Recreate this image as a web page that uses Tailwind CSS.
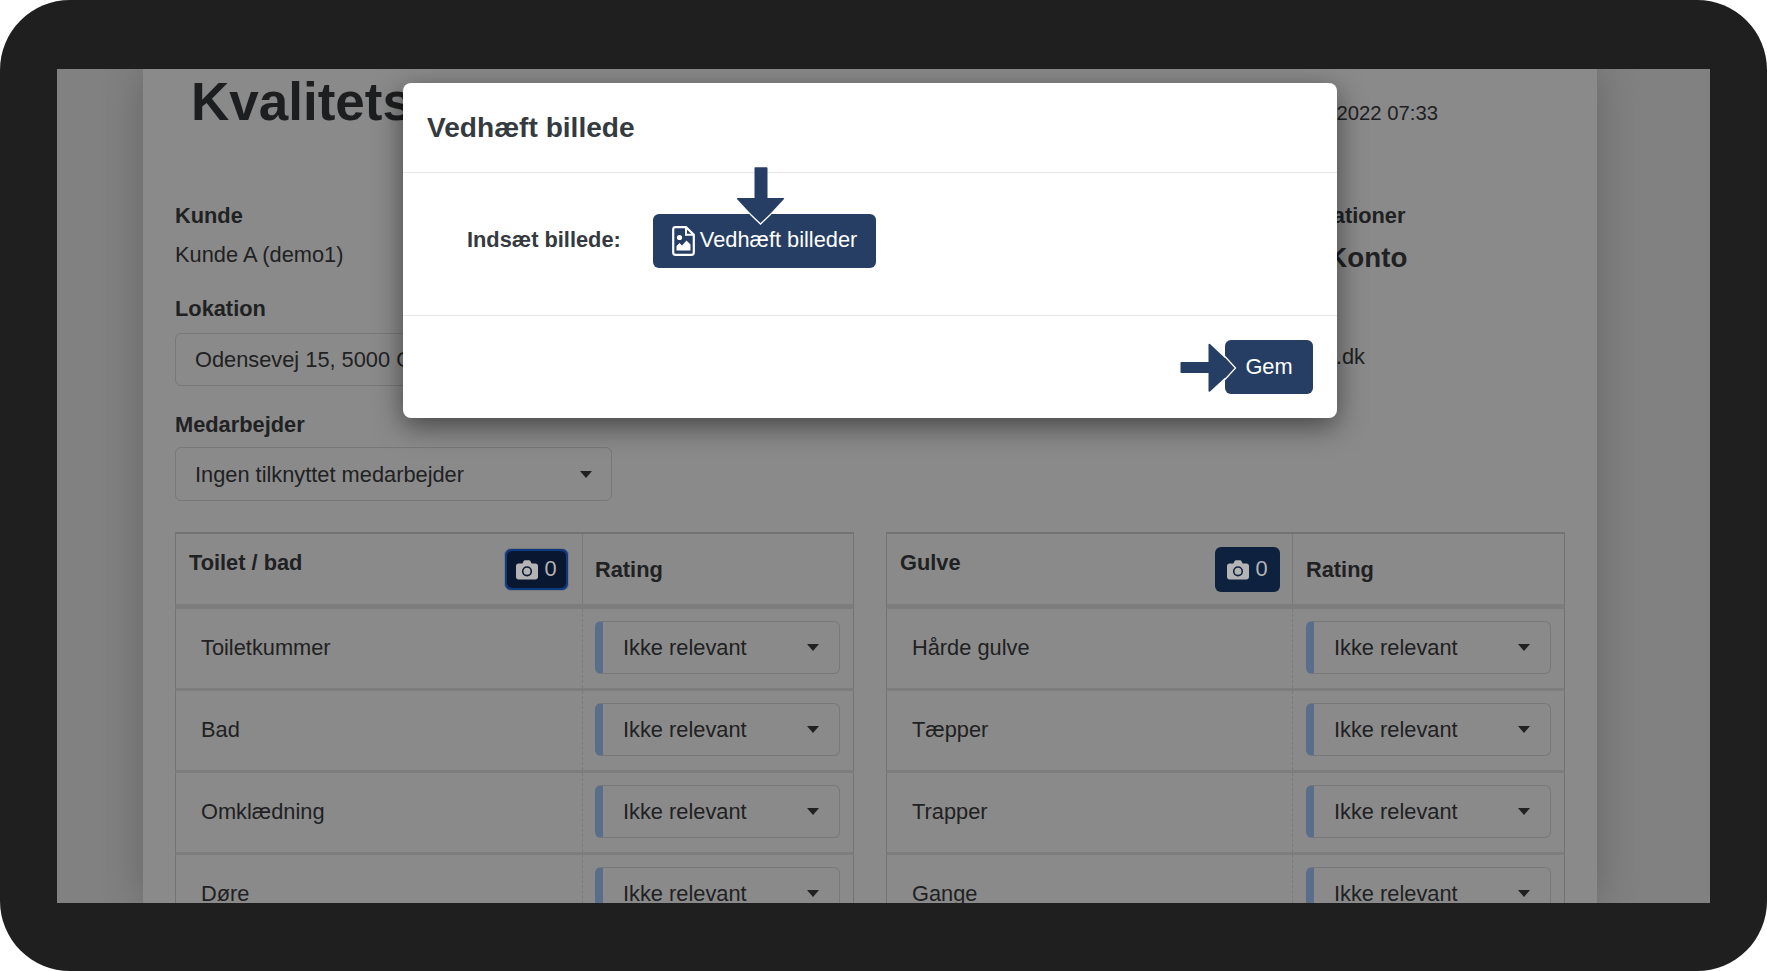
<!DOCTYPE html>
<html lang="da">
<head>
    <meta charset="UTF-8">
    <title>Vedhæft billede</title>
    <script src="https://cdn.jsdelivr.net/npm/@tailwindcss/browser@4"></script>
</head>
<body class="bg-white">
<div class="w-[1767px] h-[971px] rounded-[70px] bg-[#201f20] pt-[69px] px-[57px] font-['Liberation_Sans',sans-serif] text-[21.8px] text-[#1f2122] overflow-hidden">
    <div class="relative h-[834px] overflow-hidden bg-[#808180]">
        <!-- Dimmed page -->
        <div class="ml-[86px] w-[1454px] h-full bg-[#8a8a8a] shadow-[0_0_40px_rgba(0,0,0,0.22)] px-[32px]">
            <div class="flex justify-between h-[64px] pr-[127px]">
                <h1 class="pl-[16px] text-[53px] leading-[66px] font-bold whitespace-nowrap text-[#1c1e1f]">Kvalitetsrapport</h1>
                <span class="pt-[32px] leading-[24px] text-[20.3px]">2022 07:33</span>
            </div>
            <div class="flex">
                <div class="w-[437px] shrink-0">
                    <div class="mt-[71px] font-bold leading-[24px]">Kunde</div>
                    <div class="mt-[15px] leading-[24px]">Kunde A (demo1)</div>
                    <div class="mt-[30px] font-bold leading-[24px]">Lokation</div>
                    <div class="mt-[12px] h-[53px] rounded-[6px] border border-[#787878] pt-[2px] px-[19px] flex items-center whitespace-nowrap overflow-hidden">Odensevej 15, 5000 Odense C</div>
                    <div class="mt-[27px] font-bold leading-[24px]">Medarbejder</div>
                    <div class="mt-[10px] h-[54px] rounded-[6px] border border-[#787878] pl-[19px] pr-[19px] flex items-center justify-between">
                        <span class="pt-[2px]">Ingen tilknyttet medarbejder</span>
                        <span class="w-0 h-0 border-x-[6px] border-x-transparent border-t-[7px] border-t-[#1f2122]"></span>
                    </div>
                </div>
                <div class="ml-[653px] whitespace-nowrap">
                    <div class="mt-[71px] font-bold leading-[24px]">Informationer</div>
                    <div class="mt-[15px] pl-[7px] font-bold text-[27.7px] leading-[30px]">Min Konto</div>
                    <div class="mt-[72px] w-[100px] flex justify-end leading-[24px]">.dk</div>
                </div>
            </div>
            <div class="mt-[31px] grid grid-cols-[679px_679px] gap-x-[32px]">
                <!-- Toilet / bad -->
                <div>
                    <div class="h-[77px] flex border-x border-t-2 border-b-[5px] border-[#737373] border-b-[#7d7d7d]">
                        <div class="w-[407px] pl-[13px] pr-[13px] pt-[14px] flex justify-between border-r border-[#7a7a7a]">
                            <span class="font-bold leading-[24px] pt-[3px]">Toilet / bad</span>
                            <span class="w-[65px] h-[43px] rounded-[7px] border border-[#7b7b7b] bg-[#0c3a80] p-[2px]">
                                <span class="flex h-full items-center justify-center gap-[6px] rounded-[5px] bg-[#0a1730] text-[#b4b4b4]">
                                    <svg class="w-[22px] h-[20px]" viewBox="0 0 22 20"><path fill="#b4b4b4" d="M2.5 3.5H6.4L7.5 1.2C7.8.6 8.3.3 9 .3H13C13.7.3 14.2.6 14.5 1.2L15.6 3.5H19.5C20.9 3.5 22 4.6 22 6V17C22 18.4 20.9 19.5 19.5 19.5H2.5C1.100 19.5 0 18.400 0 17V6C0 4.600 1.100 3.500 2.500 3.500Z"/><circle cx="11" cy="11.300" r="4.300" fill="none" stroke="#0a1730" stroke-width="1.600"/></svg>
                                    <span>0</span>
                                </span>
                            </span>
                        </div>
                        <div class="pl-[12px] pt-[24px] font-bold leading-[24px]">Rating</div>
                    </div>
                    <div class="h-[82px] flex border-x border-b-[3px] border-[#737373] border-b-[#7d7d7d]">
                        <div class="w-[407px] pl-[25px] flex items-center border-r border-dashed border-[#7a7a7a]">Toiletkummer</div>
                        <div class="pl-[12px] pt-[12px]">
                            <div class="w-[245px] h-[53px] rounded-[6px] border border-[#787878] border-l-[8px] border-l-[#5a6d8b] pl-[20px] pr-[20px] flex items-center justify-between">
                                <span class="pt-[2px]">Ikke relevant</span>
                                <span class="w-0 h-0 border-x-[6px] border-x-transparent border-t-[7px] border-t-[#1f2122]"></span>
                            </div>
                        </div>
                    </div>
                    <div class="h-[82px] flex border-x border-b-[3px] border-[#737373] border-b-[#7d7d7d]">
                        <div class="w-[407px] pl-[25px] flex items-center border-r border-dashed border-[#7a7a7a]">Bad</div>
                        <div class="pl-[12px] pt-[12px]">
                            <div class="w-[245px] h-[53px] rounded-[6px] border border-[#787878] border-l-[8px] border-l-[#5a6d8b] pl-[20px] pr-[20px] flex items-center justify-between">
                                <span class="pt-[2px]">Ikke relevant</span>
                                <span class="w-0 h-0 border-x-[6px] border-x-transparent border-t-[7px] border-t-[#1f2122]"></span>
                            </div>
                        </div>
                    </div>
                    <div class="h-[82px] flex border-x border-b-[3px] border-[#737373] border-b-[#7d7d7d]">
                        <div class="w-[407px] pl-[25px] flex items-center border-r border-dashed border-[#7a7a7a]">Omklædning</div>
                        <div class="pl-[12px] pt-[12px]">
                            <div class="w-[245px] h-[53px] rounded-[6px] border border-[#787878] border-l-[8px] border-l-[#5a6d8b] pl-[20px] pr-[20px] flex items-center justify-between">
                                <span class="pt-[2px]">Ikke relevant</span>
                                <span class="w-0 h-0 border-x-[6px] border-x-transparent border-t-[7px] border-t-[#1f2122]"></span>
                            </div>
                        </div>
                    </div>
                    <div class="h-[82px] flex border-x border-b-[3px] border-[#737373] border-b-[#7d7d7d]">
                        <div class="w-[407px] pl-[25px] flex items-center border-r border-dashed border-[#7a7a7a]">Døre</div>
                        <div class="pl-[12px] pt-[12px]">
                            <div class="w-[245px] h-[53px] rounded-[6px] border border-[#787878] border-l-[8px] border-l-[#5a6d8b] pl-[20px] pr-[20px] flex items-center justify-between">
                                <span class="pt-[2px]">Ikke relevant</span>
                                <span class="w-0 h-0 border-x-[6px] border-x-transparent border-t-[7px] border-t-[#1f2122]"></span>
                            </div>
                        </div>
                    </div>
                </div>
                <!-- Gulve -->
                <div>
                    <div class="h-[77px] flex border-x border-t-2 border-b-[5px] border-[#737373] border-b-[#7d7d7d]">
                        <div class="w-[406px] pl-[13px] pr-[12px] pt-[13px] flex justify-between border-r border-[#7a7a7a]">
                            <span class="font-bold leading-[24px] pt-[4px]">Gulve</span>
                            <span class="w-[65px] h-[45px] rounded-[6px] bg-[#0e2240] flex items-center justify-center gap-[6px] text-[#b4b4b4]">
                                <svg class="w-[22px] h-[20px]" viewBox="0 0 22 20"><path fill="#b4b4b4" d="M2.5 3.5H6.4L7.5 1.2C7.8.6 8.3.3 9 .3H13C13.7.3 14.2.6 14.5 1.2L15.6 3.5H19.5C20.9 3.5 22 4.6 22 6V17C22 18.4 20.9 19.5 19.5 19.5H2.5C1.100 19.5 0 18.400 0 17V6C0 4.600 1.100 3.500 2.500 3.500Z"/><circle cx="11" cy="11.300" r="4.300" fill="none" stroke="#0e2240" stroke-width="1.600"/></svg>
                                <span>0</span>
                            </span>
                        </div>
                        <div class="pl-[13px] pt-[24px] font-bold leading-[24px]">Rating</div>
                    </div>
                    <div class="h-[82px] flex border-x border-b-[3px] border-[#737373] border-b-[#7d7d7d]">
                        <div class="w-[406px] pl-[25px] flex items-center border-r border-dashed border-[#7a7a7a]">Hårde gulve</div>
                        <div class="pl-[13px] pt-[12px]">
                            <div class="w-[245px] h-[53px] rounded-[6px] border border-[#787878] border-l-[8px] border-l-[#5a6d8b] pl-[20px] pr-[20px] flex items-center justify-between">
                                <span class="pt-[2px]">Ikke relevant</span>
                                <span class="w-0 h-0 border-x-[6px] border-x-transparent border-t-[7px] border-t-[#1f2122]"></span>
                            </div>
                        </div>
                    </div>
                    <div class="h-[82px] flex border-x border-b-[3px] border-[#737373] border-b-[#7d7d7d]">
                        <div class="w-[406px] pl-[25px] flex items-center border-r border-dashed border-[#7a7a7a]">Tæpper</div>
                        <div class="pl-[13px] pt-[12px]">
                            <div class="w-[245px] h-[53px] rounded-[6px] border border-[#787878] border-l-[8px] border-l-[#5a6d8b] pl-[20px] pr-[20px] flex items-center justify-between">
                                <span class="pt-[2px]">Ikke relevant</span>
                                <span class="w-0 h-0 border-x-[6px] border-x-transparent border-t-[7px] border-t-[#1f2122]"></span>
                            </div>
                        </div>
                    </div>
                    <div class="h-[82px] flex border-x border-b-[3px] border-[#737373] border-b-[#7d7d7d]">
                        <div class="w-[406px] pl-[25px] flex items-center border-r border-dashed border-[#7a7a7a]">Trapper</div>
                        <div class="pl-[13px] pt-[12px]">
                            <div class="w-[245px] h-[53px] rounded-[6px] border border-[#787878] border-l-[8px] border-l-[#5a6d8b] pl-[20px] pr-[20px] flex items-center justify-between">
                                <span class="pt-[2px]">Ikke relevant</span>
                                <span class="w-0 h-0 border-x-[6px] border-x-transparent border-t-[7px] border-t-[#1f2122]"></span>
                            </div>
                        </div>
                    </div>
                    <div class="h-[82px] flex border-x border-b-[3px] border-[#737373] border-b-[#7d7d7d]">
                        <div class="w-[406px] pl-[25px] flex items-center border-r border-dashed border-[#7a7a7a]">Gange</div>
                        <div class="pl-[13px] pt-[12px]">
                            <div class="w-[245px] h-[53px] rounded-[6px] border border-[#787878] border-l-[8px] border-l-[#5a6d8b] pl-[20px] pr-[20px] flex items-center justify-between">
                                <span class="pt-[2px]">Ikke relevant</span>
                                <span class="w-0 h-0 border-x-[6px] border-x-transparent border-t-[7px] border-t-[#1f2122]"></span>
                            </div>
                        </div>
                    </div>
                </div>
            </div>
        </div>

        <!-- Modal -->
        <div class="absolute left-[346px] top-[14px] w-[934px] h-[335px] rounded-[8px] bg-white text-[#343a40] shadow-[0_8px_28px_rgba(0,0,0,0.5)]">
            <div class="h-[90px] pl-[24px] pt-[30px] border-b border-[#e6e6e6] text-[28.1px] leading-[30px] font-bold">Vedhæft billede</div>
            <div class="h-[143px] pl-[64px] pb-[7px] flex items-center gap-[32px] border-b border-[#e6e6e6]">
                <span class="font-bold">Indsæt billede:</span>
                <button class="w-[223px] h-[54px] rounded-[6px] bg-[#263e63] text-white pl-[19px] flex items-center gap-[5px] whitespace-nowrap">
                    <svg class="w-[23px] h-[30px] shrink-0" viewBox="0 0 23 30"><path d="M3.500 1.200H14L21.800 8.800V26.500C21.800 27.800 20.800 28.800 19.500 28.800H3.500C2.200 28.800 1.200 27.800 1.200 26.500V3.500C1.200 2.200 2.200 1.200 3.500 1.200Z" fill="none" stroke="white" stroke-width="2.200"/><path d="M14 1.500V8.800H21.500" fill="none" stroke="white" stroke-width="2"/><circle cx="7.500" cy="11.500" r="2.600" fill="white"/><path d="M4.500 24.500V20L7.500 17L10 19.500L14.500 14.500L18.500 18.500V24.500Z" fill="white"/></svg>
                    <span>Vedhæft billeder</span>
                </button>
            </div>
            <div class="h-[102px] pr-[24px] flex items-center justify-end">
                <button class="w-[88px] h-[54px] pt-px rounded-[6px] bg-[#263e63] text-white">Gem</button>
            </div>
            <!-- Guide arrows -->
            <svg class="absolute left-[333px] top-[84px] w-[49px] h-[58px]" viewBox="0 0 49 58"><path d="M18.500 1C18.500.6 19 .3 19.500.3H30.500C31 .3 31.500.6 31.500 1V31H47.500C48.100 31 48.400 31.600 48 32L24.500 57.500L1 32C.6 31.600.9 31 1.500 31H18.500Z" fill="#263e63"/><path d="M14 47L24.500 57L35 47" fill="none" stroke="white" stroke-width="1.300"/></svg>
            <svg class="absolute left-[775px] top-[260px] w-[59px] h-[50px]" viewBox="0 0 59 50"><path d="M3.500 19H30.500V1.500C30.500.7 31.400.4 32 1L57.500 25L32 48.500C31.400 49.100 30.500 48.800 30.500 48V30H3.500C2.900 30 2.500 29.600 2.500 29V20C2.500 19.400 2.900 19 3.500 19Z" fill="#263e63"/><path d="M46.500 13L57.500 25L46.500 37" fill="none" stroke="white" stroke-width="1.300"/></svg>
        </div>
    </div>
</div>
</body>
</html>
